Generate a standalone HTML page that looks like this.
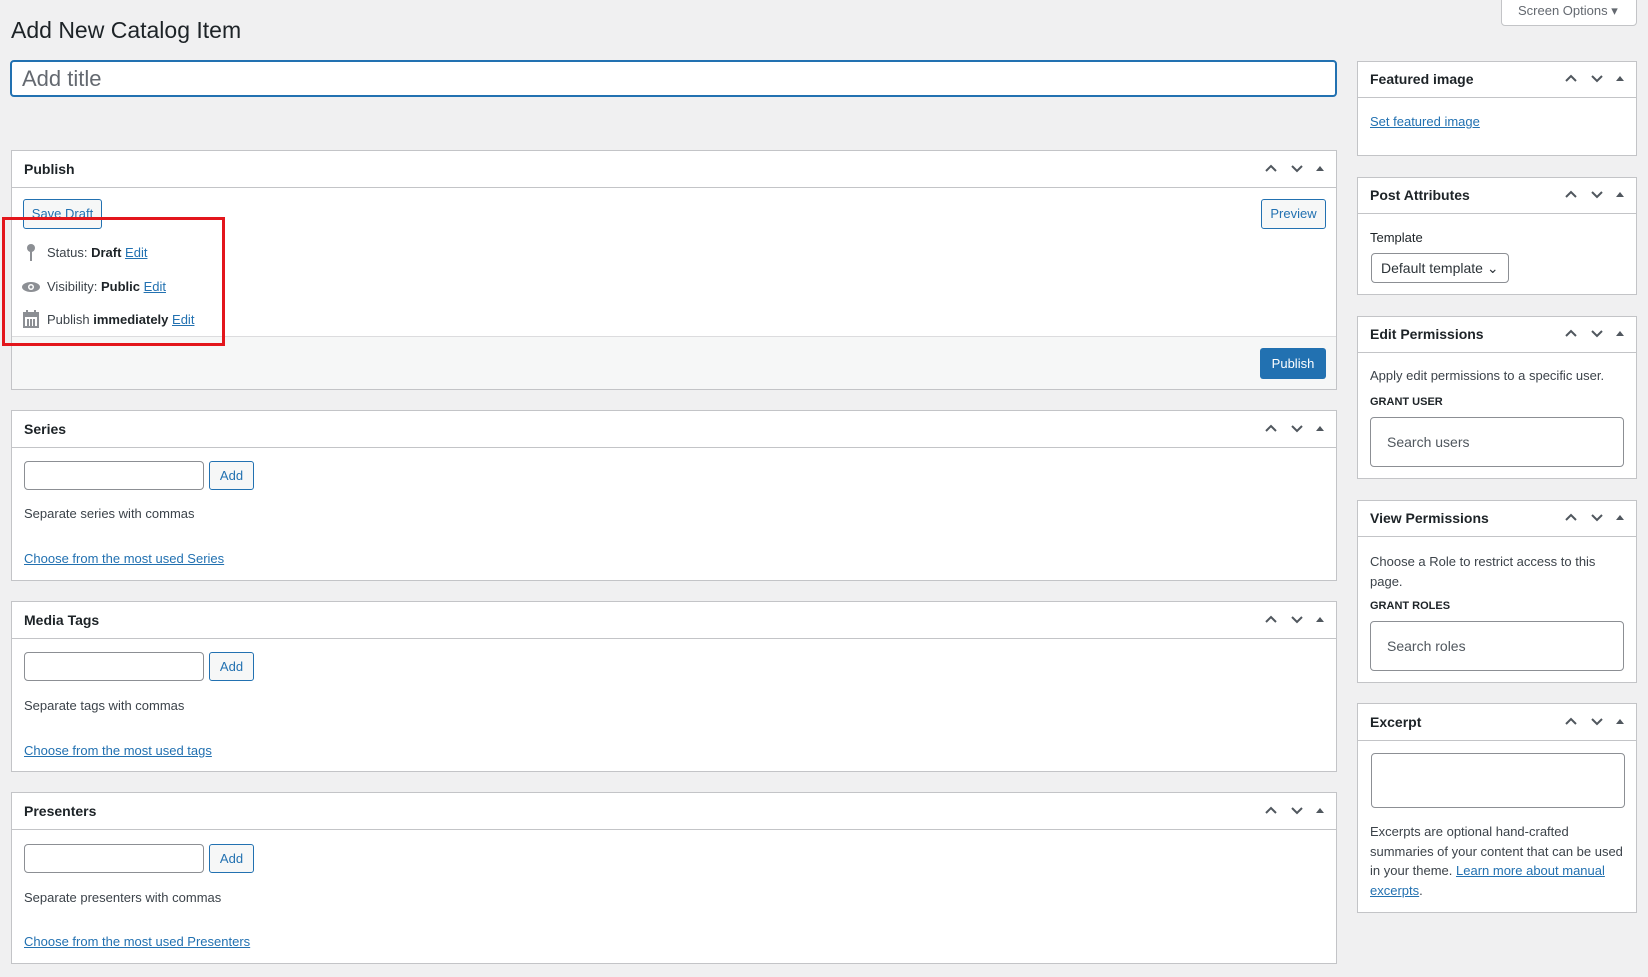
<!DOCTYPE html>
<html><head><meta charset="utf-8"><style>
*{box-sizing:border-box}
body{margin:0;width:1648px;height:977px;background:#f0f0f1;font-family:"Liberation Sans",sans-serif;font-size:13px;color:#3c434a;position:relative;overflow:hidden}
.a{position:absolute}
.box{position:absolute;background:#fff;border:1px solid #c3c4c7}
.hd{position:absolute;left:0;right:0;top:0;border-bottom:1px solid #c3c4c7;font-weight:bold;font-size:14px;color:#1d2327;padding-left:12px}
.ctl{position:absolute;right:8px;top:0;display:flex;gap:8px;align-items:center;height:100%}
a{color:#2271b1;text-decoration:underline}
.btn{position:absolute;border:1px solid #2271b1;border-radius:3px;color:#2271b1;background:#f6f7f7;font-size:13px;text-align:center}
.inp{position:absolute;border:1px solid #8c8f94;border-radius:4px;background:#fff}
.lbl{font-size:11px;font-weight:bold;color:#1d2327}
</style></head><body>
<div class="a" style="left:1501px;top:-2px;width:136px;height:28px;border:1px solid #c3c4c7;border-radius:0 0 4px 4px;background:#fff;color:#646970;font-size:13px;line-height:24px;padding-left:16px">Screen Options ▾</div>
<div class="a" style="left:11px;top:17px;font-size:23px;color:#1d2327">Add New Catalog Item</div>
<div class="a" style="left:10px;top:60px;width:1327px;height:37px;border:2px solid #2271b1;border-radius:4px;background:#fff;font-size:22px;color:#646970;line-height:33px;padding-left:10px">Add title</div>

<!-- Publish -->
<div class="box" style="left:11px;top:150px;width:1326px;height:240px">
<div class="hd" style="height:37px;line-height:36px">Publish</div>
<div class="btn" style="left:11px;top:48px;width:79px;height:30px;line-height:28px">Save Draft</div>
<div class="btn" style="left:1249px;top:48px;width:65px;height:30px;line-height:28px">Preview</div>
<div class="a" style="left:35px;top:92px;line-height:20px">Status: <b style="color:#1d2327;font-weight:600">Draft</b> <a>Edit</a></div>
<div class="a" style="left:35px;top:126px;line-height:20px">Visibility: <b style="font-weight:600;color:#1d2327">Public</b> <a>Edit</a></div>
<div class="a" style="left:35px;top:159px;line-height:20px">Publish <b style="font-weight:600;color:#1d2327">immediately</b> <a>Edit</a></div>
<svg class="a" style="left:12px;top:92px" width="16" height="20"><circle cx="7" cy="5" r="4" fill="#8c8f94"/><rect x="6" y="8" width="2" height="10" fill="#8c8f94"/></svg>
<svg class="a" style="left:9px;top:128px" width="20" height="16"><ellipse cx="10" cy="8" rx="9" ry="5" fill="#8c8f94"/><circle cx="10" cy="8" r="3" fill="#fff"/><circle cx="10" cy="8" r="1.5" fill="#8c8f94"/></svg>
<svg class="a" style="left:11px;top:159px" width="16" height="18"><rect x="1" y="3" width="14" height="14" fill="none" stroke="#8c8f94" stroke-width="2"/><rect x="1" y="3" width="14" height="4" fill="#8c8f94"/><rect x="4" y="9" width="2" height="7" fill="#8c8f94"/><rect x="7" y="9" width="2" height="7" fill="#8c8f94"/><rect x="10" y="9" width="2" height="7" fill="#8c8f94"/><rect x="3" y="0" width="2" height="4" fill="#8c8f94"/><rect x="11" y="0" width="2" height="4" fill="#8c8f94"/></svg>
<div class="a" style="left:0;right:0;top:185px;bottom:0;background:#f6f7f7;border-top:1px solid #dcdcde"></div>
<div class="a" style="left:1248px;top:197px;width:66px;height:31px;background:#2271b1;border-radius:3px;color:#fff;text-align:center;line-height:31px">Publish</div>
</div>
<div class="a" style="left:2px;top:217px;width:223px;height:129px;border:3px solid #e3161c"></div>

<!-- Series etc -->
<div class="box" style="left:11px;top:410px;width:1326px;height:171px"><div class="hd" style="height:37px;line-height:36px">Series</div>
<div class="inp" style="left:12px;top:50px;width:180px;height:29px"></div><div class="btn" style="left:197px;top:50px;width:45px;height:29px;line-height:27px">Add</div>
<div class="a" style="left:12px;top:95px">Separate series with commas</div><div class="a" style="left:12px;top:140px"><a>Choose from the most used Series</a></div></div>

<div class="box" style="left:11px;top:601px;width:1326px;height:171px"><div class="hd" style="height:37px;line-height:36px">Media Tags</div>
<div class="inp" style="left:12px;top:50px;width:180px;height:29px"></div><div class="btn" style="left:197px;top:50px;width:45px;height:29px;line-height:27px">Add</div>
<div class="a" style="left:12px;top:96px">Separate tags with commas</div><div class="a" style="left:12px;top:141px"><a>Choose from the most used tags</a></div></div>

<div class="box" style="left:11px;top:792px;width:1326px;height:172px"><div class="hd" style="height:37px;line-height:36px">Presenters</div>
<div class="inp" style="left:12px;top:51px;width:180px;height:29px"></div><div class="btn" style="left:197px;top:51px;width:45px;height:29px;line-height:27px">Add</div>
<div class="a" style="left:12px;top:97px">Separate presenters with commas</div><div class="a" style="left:12px;top:141px"><a>Choose from the most used Presenters</a></div></div>

<!-- right -->
<div class="box" style="left:1357px;top:61px;width:280px;height:95px"><div class="hd" style="height:36px;line-height:35px">Featured image</div>
<div class="a" style="left:12px;top:52px"><a>Set featured image</a></div></div>

<div class="box" style="left:1357px;top:177px;width:280px;height:118px"><div class="hd" style="height:36px;line-height:35px">Post Attributes</div>
<div class="a" style="left:12px;top:52px;color:#1d2327">Template</div>
<div class="inp" style="left:13px;top:75px;width:138px;height:30px;color:#2c3338;font-size:14px;line-height:28px;padding-left:9px">Default template ⌄</div></div>

<div class="box" style="left:1357px;top:316px;width:280px;height:163px"><div class="hd" style="height:36px;line-height:35px">Edit Permissions</div>
<div class="a" style="left:12px;top:51px">Apply edit permissions to a specific user.</div>
<div class="a lbl" style="left:12px;top:79px">GRANT USER</div>
<div class="inp" style="left:12px;top:100px;width:254px;height:50px;line-height:48px;padding-left:16px;font-size:14px;color:#50575e">Search users</div></div>

<div class="box" style="left:1357px;top:500px;width:280px;height:183px"><div class="hd" style="height:36px;line-height:35px">View Permissions</div>
<div class="a" style="left:12px;top:51px;width:250px;line-height:20px">Choose a Role to restrict access to this page.</div>
<div class="a lbl" style="left:12px;top:99px">GRANT ROLES</div>
<div class="inp" style="left:12px;top:120px;width:254px;height:50px;line-height:48px;padding-left:16px;font-size:14px;color:#50575e">Search roles</div></div>

<div class="box" style="left:1357px;top:703px;width:280px;height:210px"><div class="hd" style="height:37px;line-height:36px">Excerpt</div>
<div class="inp" style="left:13px;top:49px;width:254px;height:55px"></div>
<div class="a" style="left:12px;top:118px;width:258px;line-height:19.6px">Excerpts are optional hand-crafted summaries of your content that can be used in your theme. <a>Learn more about manual excerpts</a>.</div></div>

<svg width="0" height="0" style="position:absolute"><defs>
<g id="c"><path d="M1 7 L6 2 L11 7" fill="none" stroke="#50575e" stroke-width="2"/><path d="M27 2 L32 7 L37 2" fill="none" stroke="#50575e" stroke-width="2"/><path d="M51 7 L55 2 L59 7Z" fill="#50575e"/></g></defs></svg>
<svg class="a" style="left:1265px;top:164px" width="60" height="10"><use href="#c"/></svg>
<svg class="a" style="left:1265px;top:424px" width="60" height="10"><use href="#c"/></svg>
<svg class="a" style="left:1265px;top:615px" width="60" height="10"><use href="#c"/></svg>
<svg class="a" style="left:1265px;top:806px" width="60" height="10"><use href="#c"/></svg>
<svg class="a" style="left:1565px;top:74px" width="60" height="10"><use href="#c"/></svg>
<svg class="a" style="left:1565px;top:190px" width="60" height="10"><use href="#c"/></svg>
<svg class="a" style="left:1565px;top:329px" width="60" height="10"><use href="#c"/></svg>
<svg class="a" style="left:1565px;top:513px" width="60" height="10"><use href="#c"/></svg>
<svg class="a" style="left:1565px;top:717px" width="60" height="10"><use href="#c"/></svg>
</body></html>
